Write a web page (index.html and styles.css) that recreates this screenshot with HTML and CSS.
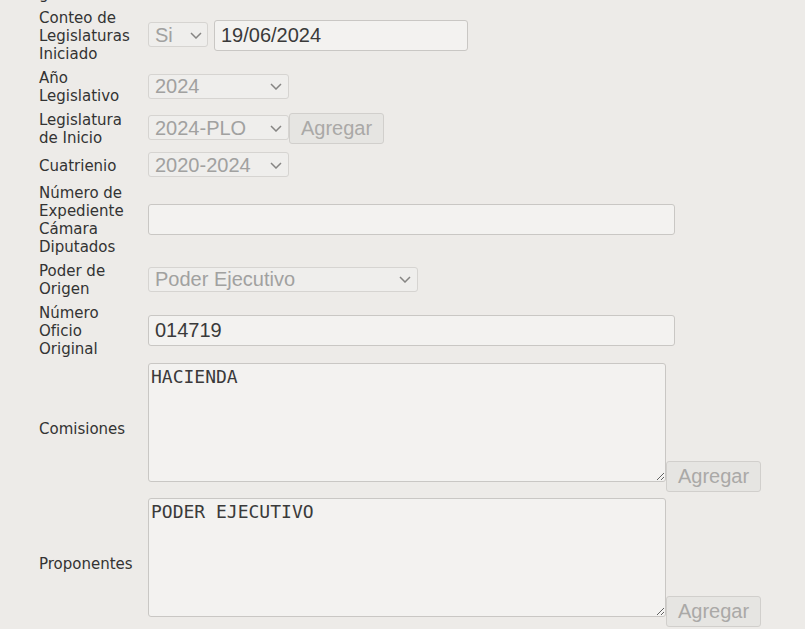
FILE: index.html
```html
<!DOCTYPE html>
<html lang="es">
<head>
<meta charset="utf-8">
<title>Expediente</title>
<link rel="stylesheet" href="styles.css">
</head>
<body>
<table class="form">
  <tr>
    <td class="lbl">Fecha de gestión</td>
    <td class="ctl"></td>
  </tr>
  <tr>
    <td class="lbl">Conteo de Legislaturas Iniciado</td>
    <td class="ctl">
      <div class="group gap">
        <span class="pick pick-si">
          <select class="sel" disabled><option>Si</option></select>
          <svg class="chev" viewBox="0 0 12 7" aria-hidden="true"><path d="M1 1l5 5 5-5"/></svg>
        </span>
        <input class="txt txt-date" type="text" value="19/06/2024">
      </div>
    </td>
  </tr>
  <tr>
    <td class="lbl">Año Legislativo</td>
    <td class="ctl">
      <span class="pick pick-sm">
        <select class="sel" disabled><option>2024</option></select>
        <svg class="chev" viewBox="0 0 12 7" aria-hidden="true"><path d="M1 1l5 5 5-5"/></svg>
      </span>
    </td>
  </tr>
  <tr>
    <td class="lbl">Legislatura de Inicio</td>
    <td class="ctl">
      <div class="group">
        <span class="pick pick-sm">
          <select class="sel" disabled><option>2024-PLO</option></select>
          <svg class="chev" viewBox="0 0 12 7" aria-hidden="true"><path d="M1 1l5 5 5-5"/></svg>
        </span>
        <button class="btn btn-side" type="button" disabled>Agregar</button>
      </div>
    </td>
  </tr>
  <tr>
    <td class="lbl">Cuatrienio</td>
    <td class="ctl">
      <span class="pick pick-sm">
        <select class="sel" disabled><option>2020-2024</option></select>
        <svg class="chev" viewBox="0 0 12 7" aria-hidden="true"><path d="M1 1l5 5 5-5"/></svg>
      </span>
    </td>
  </tr>
  <tr>
    <td class="lbl">Número de Expediente Cámara Diputados</td>
    <td class="ctl"><input class="txt txt-wide" type="text" value=""></td>
  </tr>
  <tr>
    <td class="lbl">Poder de Origen</td>
    <td class="ctl">
      <span class="pick pick-md">
        <select class="sel" disabled><option>Poder Ejecutivo</option></select>
        <svg class="chev" viewBox="0 0 12 7" aria-hidden="true"><path d="M1 1l5 5 5-5"/></svg>
      </span>
    </td>
  </tr>
  <tr>
    <td class="lbl">Número Oficio Original</td>
    <td class="ctl"><input class="txt txt-wide" type="text" value="014719"></td>
  </tr>
  <tr>
    <td class="lbl">Comisiones</td>
    <td class="ctl">
      <div class="area">
        <textarea class="memo">HACIENDA</textarea>
        <button class="btn" type="button" disabled>Agregar</button>
      </div>
    </td>
  </tr>
  <tr>
    <td class="lbl">Proponentes</td>
    <td class="ctl">
      <div class="area">
        <textarea class="memo">PODER EJECUTIVO</textarea>
        <button class="btn" type="button" disabled>Agregar</button>
      </div>
    </td>
  </tr>
</table>
</body>
</html>
```

FILE: styles.css
```css
html {
  overflow: hidden;
}

body {
  margin: 0;
  background: #edebe8;
  color: #333;
  font-family: "DejaVu Sans", Verdana, sans-serif;
  font-size: 15px;
}

.form {
  margin: -37px 0 0 39px;
  border-collapse: separate;
  border-spacing: 0;
}

.form td {
  padding: 3px 0;
  vertical-align: middle;
}

.form td.lbl {
  width: 100px;
  padding: 4px 9px 2px 0;
  line-height: normal;
}

.group {
  display: flex;
  align-items: baseline;
}

.group.gap {
  gap: 6px;
}

.btn-side {
  margin-left: 1px;
}

/* select with its own chevron drawn on top */
.pick {
  position: relative;
  display: inline-flex;
}

.pick-si { width: 60px; }
.pick-sm { width: 141px; }
.pick-md { width: 270px; }

.chev {
  position: absolute;
  top: 50%;
  right: 7px;
  width: 12px;
  height: 7px;
  margin-top: -3px;
  fill: none;
  stroke: #868583;
  stroke-width: 1.5;
  pointer-events: none;
}

.pick-si .chev {
  right: 6px;
}

.sel,
.txt,
.btn,
.memo {
  margin: 0;
  box-sizing: border-box;
  border-radius: 3px;
}

.sel,
.txt,
.btn {
  font-family: "Liberation Sans", Arial, sans-serif;
  font-size: 20px;
}

.sel {
  width: 100%;
  height: 25px;
  padding: 0 22px 0 6px;
  appearance: none;
  -webkit-appearance: none;
  border: 1px solid #d6d4d1;
  background-color: #efeeec;
  color: #a1a1a0;
  opacity: 1;
}

.txt {
  height: 31px;
  padding: 3px 6px;
  border: 1px solid #c9c7c4;
  background: #f3f2f0;
  color: #3a3a3a;
}

.txt-date { width: 254px; }
.txt-wide { width: 527px; }

.btn {
  height: 31px;
  padding: 3px 11px;
  border: 1px solid #d1cfcc;
  background: #e6e5e2;
  color: #aaa9a7;
}

.area {
  display: flex;
  align-items: flex-end;
}

.memo {
  width: 518px;
  height: 119px;
  margin-bottom: 10px;
  padding: 2px;
  border: 1px solid #c9c7c4;
  background: #f3f2f0;
  color: #3a3a3a;
  font-family: "DejaVu Sans Mono", monospace;
  font-size: 18px;
}
```
